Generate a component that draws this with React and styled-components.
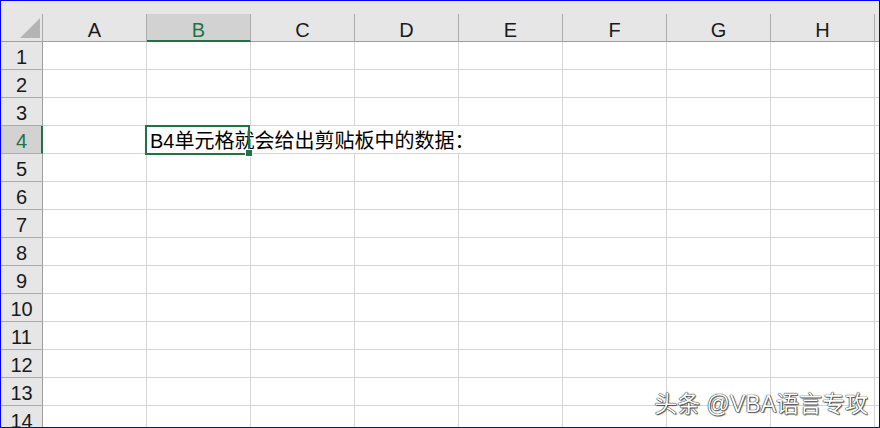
import React from "react";
import styled, { createGlobalStyle, css } from "styled-components";

const GREEN = "#217346";
const COLS = ["A", "B", "C", "D", "E", "F", "G", "H"];
const ROWS = Array.from({ length: 14 }, (_, i) => i + 1);
const GRID = "42px repeat(8, 104px) 1fr";

const GlobalStyle = createGlobalStyle`
  html, body { margin: 0; padding: 0; background: #fff; }
  * { box-sizing: border-box; }
`;

const Sheet = styled.div`
  position: relative;
  width: 880px;
  height: 428px;
  border: 1px solid #0000f0;
  overflow: hidden;
  background: #fff;
  font-family: "Liberation Sans", "Noto Sans CJK SC", sans-serif;
  color: #111;
`;

const HeaderBar = styled.div`
  display: grid;
  grid-template-columns: ${GRID};
  background: #e6e6e6;
  padding-top: 13px;
`;

const Corner = styled.div`
  height: 28px;
  display: flex;
  justify-content: flex-end;
  align-items: flex-end;
  padding: 0 2px 3px 0;
  border-right: 1px solid #a9a9a9;
  border-bottom: 1px solid #9f9f9f;
`;

const ColHead = styled.div`
  height: 28px;
  text-align: center;
  font-size: 20px;
  line-height: 24px;
  padding-top: 4px;
  border-right: 1px solid #ababab;
  border-bottom: 1px solid #9f9f9f;
  color: #1a1a1a;
  ${(p) =>
    p.$active &&
    css`
      background: #d2d2d2;
      color: ${GREEN};
      border-bottom: 2px solid ${GREEN};
    `}
`;

const HeadTail = styled.div`
  height: 28px;
  border-bottom: 1px solid #9f9f9f;
`;

const Row = styled.div`
  display: grid;
  grid-template-columns: ${GRID};
  height: 28px;
`;

const RowHead = styled.div`
  background: #e6e6e6;
  text-align: center;
  font-size: 20px;
  line-height: 24px;
  padding-top: 3px;
  border-right: 1px solid #9f9f9f;
  border-bottom: 1px solid #ababab;
  color: #1a1a1a;
  ${(p) =>
    p.$active &&
    css`
      background: #d2d2d2;
      color: ${GREEN};
      border-right: 2px solid ${GREEN};
      padding-left: 1px;
    `}
`;

const Cell = styled.div`
  border-right: 1px solid #d4d4d4;
  border-bottom: 1px solid #d4d4d4;
`;

const TailCell = styled.div`
  border-bottom: 1px solid #d4d4d4;
`;

const TextCell = styled.div`
  grid-column: span ${(p) => p.$span};
  position: relative;
  border-right: 1px solid #d4d4d4;
  border-bottom: 1px solid #d4d4d4;
  padding: 3px 0 0 3px;
  font-size: 20px;
  line-height: 24px;
  white-space: nowrap;
  color: #000;
`;

const Selection = styled.div`
  position: absolute;
  left: -2px;
  top: -1px;
  width: 105px;
  height: 30px;
  border: 2px solid ${GREEN};
  pointer-events: none;
`;

const Handle = styled.div`
  position: absolute;
  right: -5px;
  bottom: -4px;
  width: 8px;
  height: 8px;
  background: ${GREEN};
  border: 1px solid #fff;
`;

const Watermark = styled.div`
  position: absolute;
  right: 11px;
  top: 392px;
  font-size: 23px;
  line-height: 23px;
  color: #fff;
  white-space: nowrap;
  text-shadow: 0 0 1px #000, 0 0 1px #000, 1px 1px 1px rgba(0, 0, 0, 0.6);
`;

function CornerMark() {
  return (
    <svg width="20" height="20" viewBox="0 0 20 20">
      <polygon points="0,20 20,20 20,0" fill="#b4b4b4" />
    </svg>
  );
}

export default function App() {
  return (
    <>
      <GlobalStyle />
      <Sheet>
        <HeaderBar>
          <Corner>
            <CornerMark />
          </Corner>
          {COLS.map((c) => (
            <ColHead key={c} $active={c === "B"}>
              {c}
            </ColHead>
          ))}
          <HeadTail />
        </HeaderBar>
        {ROWS.map((r) => (
          <Row key={r}>
            <RowHead $active={r === 4}>{r}</RowHead>
            {r === 4 ? (
              <>
                <Cell />
                <TextCell $span={4}>
                  B4单元格就会给出剪贴板中的数据：
                  <Selection>
                    <Handle />
                  </Selection>
                </TextCell>
                <Cell />
                <Cell />
                <Cell />
              </>
            ) : (
              COLS.map((c) => <Cell key={c} />)
            )}
            <TailCell />
          </Row>
        ))}
        <Watermark>头条 @VBA语言专攻</Watermark>
      </Sheet>
    </>
  );
}
